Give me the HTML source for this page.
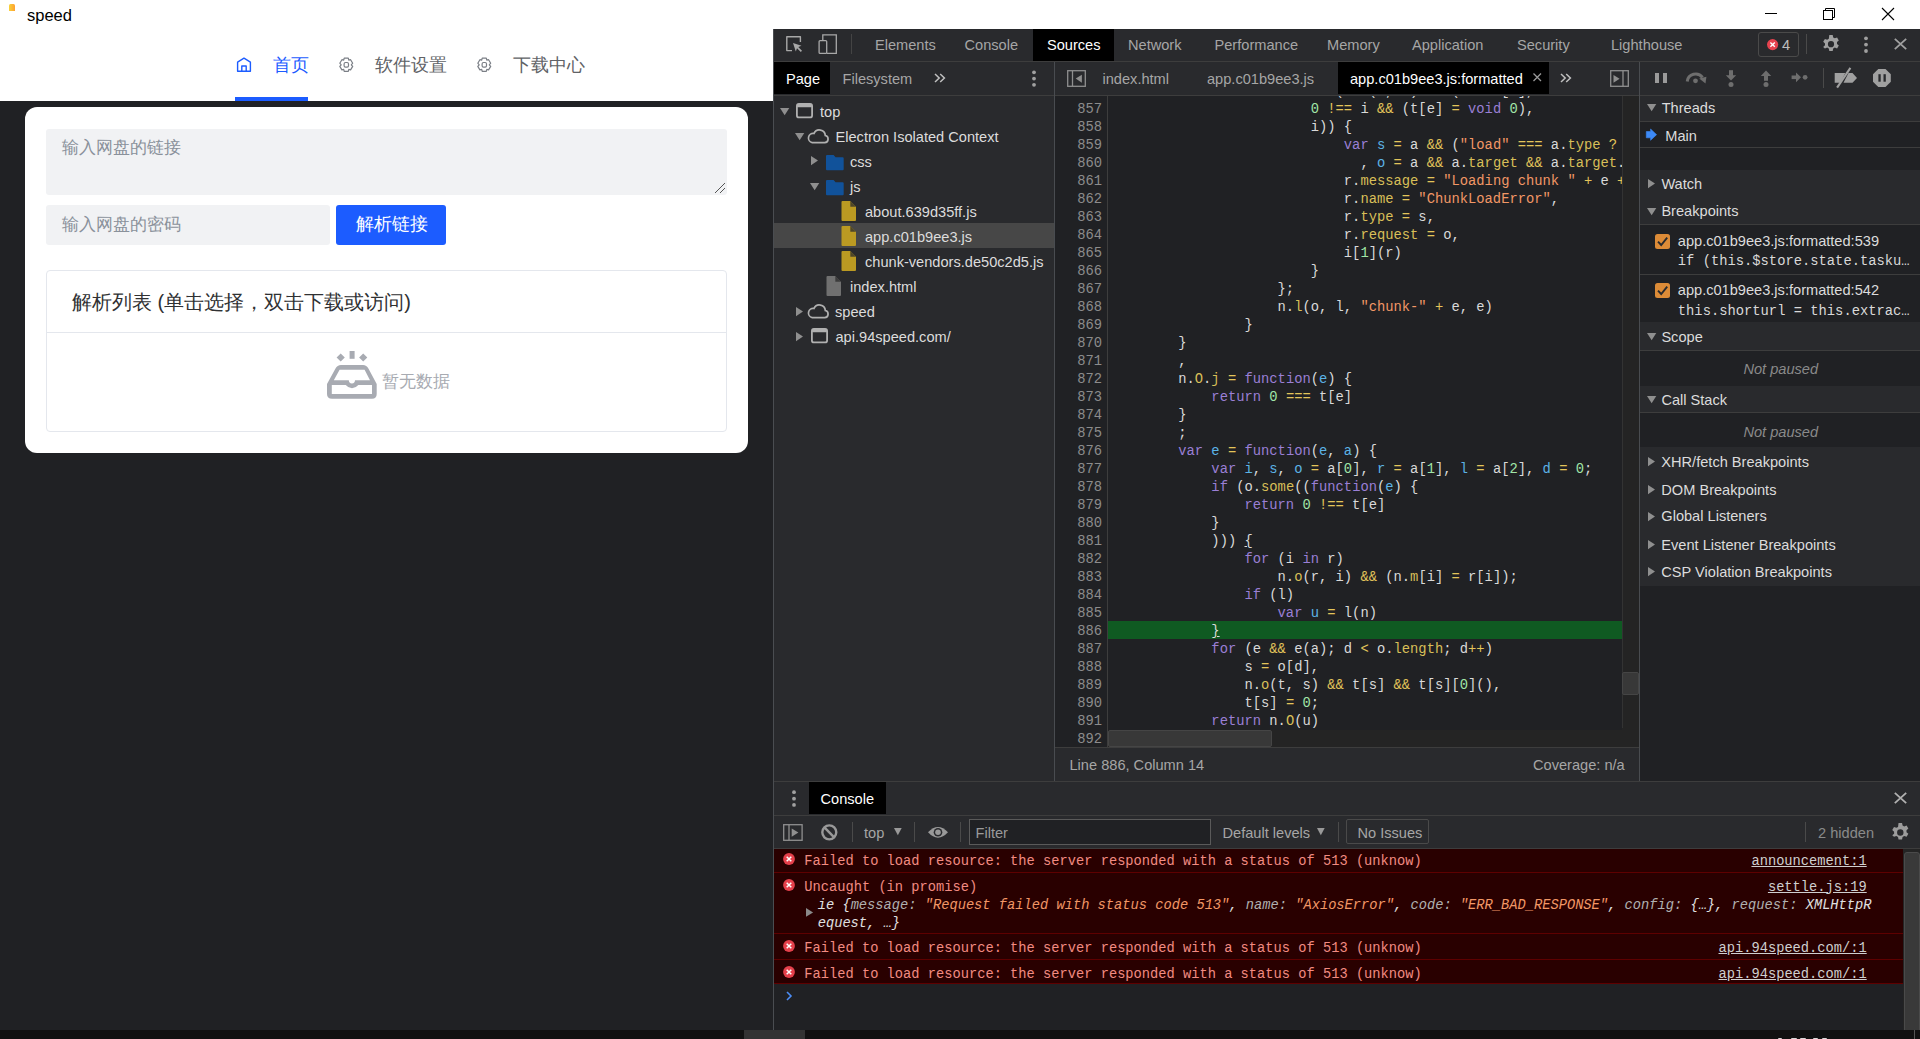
<!DOCTYPE html>
<html><head><meta charset="utf-8">
<style>
*{margin:0;padding:0;box-sizing:border-box}
html,body{width:1920px;height:1039px;overflow:hidden;background:#202124;font-family:"Liberation Sans",sans-serif;position:relative}
.a{position:absolute}
.t{position:absolute;white-space:pre;line-height:1}
/* title bar */
#title{left:0;top:0;width:1920px;height:29px;background:#fff}
/* app */
#nav{left:0;top:29px;width:773px;height:72px;background:#fff}
#card{left:25px;top:107px;width:723px;height:346px;background:#fff;border-radius:12px}
.navt{font-size:17.5px}
.ph{color:#8a919b;font-size:17px}
/* devtools */
#dt{left:773px;top:29px;width:1147px;height:1001px;background:#292a2d;border-left:1px solid #3d3d3d}
.ui{color:#9aa0a6;font-size:15px}
.m{font-family:"Liberation Mono",monospace}
#taskbar{left:0;top:1030px;width:1920px;height:9px;background:#111}
</style></head><body>

<div id="title" class="a">
  <div class="a" style="left:9px;top:4px;width:6px;height:7px;background:linear-gradient(90deg,#f7d23a,#ffa030);border-radius:1.5px 1.5px 0 0"></div>
  <div class="t" style="left:27px;top:6.5px;font-size:16.5px;color:#000">speed</div>
</div>

<div id="nav" class="a">
  <svg class="a" style="left:236px;top:28px" width="16" height="15" viewBox="0 0 16 15"><path d="M1.6 14.2V5.2L8 1.2l6.4 4v9zM5.8 14.2V9h4.4v5.2" fill="none" stroke="#1c5cff" stroke-width="1.4" stroke-linejoin="round"/></svg>
  <div class="t navt" style="left:273px;top:27.5px;color:#1c5cff">首页</div>
  <div class="a" style="left:235px;top:68px;width:73px;height:4px;background:#1c5cff"></div>
  <svg class="a gear" style="left:338px;top:28px" width="17" height="16" viewBox="0 0 17 16"><path d="M6.2 1.2h4.1l.5 2 1.8 -.5 2.1 3.5 -1.4 1.6 1.4 1.6 -2.1 3.5 -1.8 -.5 -.5 2H6.2l-.5-2 -1.8.5L1.8 9.4l1.4-1.6L1.8 6.2l2.1-3.5 1.8.5z" fill="none" stroke="#7b7f86" stroke-width="1.2" stroke-linejoin="round"/><rect x="6.1" y="5.5" width="4.4" height="4.6" rx="1.4" fill="none" stroke="#7b7f86" stroke-width="1.2"/></svg>
  <div class="t navt" style="left:375px;top:27.5px;color:#606266">软件设置</div>
  <svg class="a gear" style="left:476px;top:28px" width="17" height="16" viewBox="0 0 17 16"><path d="M6.2 1.2h4.1l.5 2 1.8 -.5 2.1 3.5 -1.4 1.6 1.4 1.6 -2.1 3.5 -1.8 -.5 -.5 2H6.2l-.5-2 -1.8.5L1.8 9.4l1.4-1.6L1.8 6.2l2.1-3.5 1.8.5z" fill="none" stroke="#7b7f86" stroke-width="1.2" stroke-linejoin="round"/><rect x="6.1" y="5.5" width="4.4" height="4.6" rx="1.4" fill="none" stroke="#7b7f86" stroke-width="1.2"/></svg>
  <div class="t navt" style="left:513px;top:27.5px;color:#606266">下载中心</div>
</div>
<div id="card" class="a">
  <div class="a" style="left:21px;top:22px;width:681px;height:66px;background:#f1f2f4;border-radius:3px"></div>
  <div class="t ph" style="left:37px;top:32px">输入网盘的链接</div>
  <svg class="a" style="left:689px;top:75px" width="12" height="12" viewBox="0 0 12 12"><path d="M1 11L11 1M6 11l5-5" stroke="#555" stroke-width="1"/></svg>
  <div class="a" style="left:21px;top:98px;width:284px;height:40px;background:#f1f2f4;border-radius:3px"></div>
  <div class="t ph" style="left:37px;top:109px">输入网盘的密码</div>
  <div class="a" style="left:311px;top:98px;width:110px;height:40px;background:#1c5cff;border-radius:3px"></div>
  <div class="t" style="left:331px;top:109px;font-size:17.5px;color:#fff">解析链接</div>
  <div class="a" style="left:21px;top:163px;width:681px;height:162px;border:1px solid #e4e7ed;border-radius:4px"></div>
  <div class="a" style="left:22px;top:225px;width:679px;height:1px;background:#e4e7ed"></div>
  <div class="t" style="left:47px;top:185px;font-size:20px;color:#303133">解析列表 (单击选择，双击下载或访问)</div>
  <svg class="a" style="left:302px;top:244px" width="50" height="48" viewBox="0 0 50 48">
    <rect x="22.6" y="0" width="5" height="7.8" fill="#a8abb2"/>
    <path d="M13.7 2.4l4.1 4.1-4.1 4.1-4.1-4.1z M36.2 2.4l4.1 4.1-4.1 4.1-4.1-4.1z" fill="#a8abb2"/>
    <path d="M8.5 17.5Q10.3 14 14 14H36Q39.6 14 41.4 17.5L49.7 33V43Q49.7 47.8 45 47.8H5Q0 47.8 0 43V33Z" fill="#a8abb2"/>
    <path d="M12.6 18.8H37.6L43 29.3H28A3.1 3.1 0 0 1 21.8 29.3H6.8Z" fill="#fff"/>
    <path d="M4.8 34H18.8Q21.5 37.3 25 37.3Q28.5 37.3 31.3 34H45V43H4.8Z" fill="#fff"/>
  </svg>
  <div class="t" style="left:356.8px;top:265.8px;font-size:17.2px;color:#a8abb2">暂无数据</div>
</div>

<div class="a" style="left:773px;top:29px;width:1px;height:1001px;background:#4a4d51;"></div>
<div class="a" style="left:774px;top:29px;width:1146px;height:1001px;background:#292a2d;"></div>
<div class="a" style="left:774px;top:61px;width:1146px;height:1px;background:#3d3d3d;"></div>
<div class="a" style="left:1033px;top:29px;width:81px;height:32px;background:#000;"></div>
<div class="t" style="left:875px;top:37.64px;font-size:14.6px;color:#a6a6a6;">Elements</div>
<div class="t" style="left:964.5px;top:37.64px;font-size:14.6px;color:#a6a6a6;">Console</div>
<div class="t" style="left:1047px;top:37.64px;font-size:14.6px;color:#fff;">Sources</div>
<div class="t" style="left:1128px;top:37.64px;font-size:14.6px;color:#a6a6a6;">Network</div>
<div class="t" style="left:1214.5px;top:37.64px;font-size:14.6px;color:#a6a6a6;">Performance</div>
<div class="t" style="left:1327px;top:37.64px;font-size:14.6px;color:#a6a6a6;">Memory</div>
<div class="t" style="left:1412px;top:37.64px;font-size:14.6px;color:#a6a6a6;">Application</div>
<div class="t" style="left:1517px;top:37.64px;font-size:14.6px;color:#a6a6a6;">Security</div>
<div class="t" style="left:1611px;top:37.64px;font-size:14.6px;color:#a6a6a6;">Lighthouse</div>
<div class="a" style="left:774px;top:95px;width:1146px;height:1px;background:#3d3d3d;"></div>
<div class="a" style="left:774px;top:62px;width:56px;height:32px;background:#000;"></div>
<div class="t" style="left:786px;top:71.64px;font-size:14.6px;color:#fff;">Page</div>
<div class="t" style="left:842.5px;top:71.64px;font-size:14.6px;color:#a6a6a6;">Filesystem</div>
<div class="a" style="left:1054px;top:62px;width:1px;height:719px;background:#494c50;"></div>
<div class="a" style="left:1338px;top:62px;width:211px;height:32px;background:#000;"></div>
<div class="t" style="left:1102.5px;top:71.64px;font-size:14.6px;color:#a6a6a6;">index.html</div>
<div class="t" style="left:1207px;top:71.64px;font-size:14.6px;color:#a6a6a6;">app.c01b9ee3.js</div>
<div class="t" style="left:1350px;top:71.64px;font-size:14.6px;color:#fff;">app.c01b9ee3.js:formatted</div>
<div class="a" style="left:1639px;top:62px;width:1px;height:719px;background:#494c50;"></div>
<div class="a" style="left:774px;top:223px;width:280px;height:25px;background:#474747;"></div>
<div class="t" style="left:820px;top:105.14px;font-size:14.6px;color:#dcdcdc;">top</div>
<div class="t" style="left:835.5px;top:130.14px;font-size:14.6px;color:#dcdcdc;">Electron Isolated Context</div>
<div class="t" style="left:850px;top:155.14px;font-size:14.6px;color:#dcdcdc;">css</div>
<div class="t" style="left:850px;top:180.14px;font-size:14.6px;color:#dcdcdc;">js</div>
<div class="t" style="left:865px;top:205.14px;font-size:14.6px;color:#dcdcdc;">about.639d35ff.js</div>
<div class="t" style="left:865px;top:230.14px;font-size:14.6px;color:#dcdcdc;">app.c01b9ee3.js</div>
<div class="t" style="left:865px;top:255.14px;font-size:14.6px;color:#dcdcdc;">chunk-vendors.de50c2d5.js</div>
<div class="t" style="left:850px;top:280.14px;font-size:14.6px;color:#dcdcdc;">index.html</div>
<div class="t" style="left:835px;top:305.14px;font-size:14.6px;color:#dcdcdc;">speed</div>
<div class="t" style="left:835.5px;top:330.14px;font-size:14.6px;color:#dcdcdc;">api.94speed.com/</div>
<div class="a" style="left:1055px;top:96px;width:584px;height:651px;background:#202124;"></div>
<div class="a" style="left:1107px;top:96px;width:1px;height:651px;background:#3d3d3d;"></div>
<div class="a" style="left:1055px;top:747px;width:584px;height:1px;background:#3d3d3d;"></div>
<div class="a" style="left:774px;top:781px;width:1146px;height:1px;background:#3d3d3d;"></div>
<div class="t" style="left:1069.5px;top:757.64px;font-size:14.6px;color:#a6a6a6;">Line 886, Column 14</div>
<div class="t" style="left:1533px;top:757.64px;font-size:14.6px;color:#a6a6a6;">Coverage: n/a</div>
<div class="a" style="left:1640px;top:96px;width:280px;height:685px;background:#202124;"></div>
<div class="a" style="left:1640px;top:96px;width:280px;height:25px;background:#292a2d;"></div>
<div class="a" style="left:1640px;top:121px;width:280px;height:1px;background:#3d3d3d;"></div>
<div class="a" style="left:1640px;top:147px;width:280px;height:1px;background:#3d3d3d;"></div>
<div class="a" style="left:1640px;top:170px;width:280px;height:54px;background:#292a2d;"></div>
<div class="a" style="left:1640px;top:224px;width:280px;height:1px;background:#3d3d3d;"></div>
<div class="a" style="left:1640px;top:274px;width:280px;height:1px;background:#3d3d3d;"></div>
<div class="a" style="left:1640px;top:322px;width:280px;height:28px;background:#292a2d;"></div>
<div class="a" style="left:1640px;top:350px;width:280px;height:1px;background:#3d3d3d;"></div>
<div class="a" style="left:1640px;top:386px;width:280px;height:26px;background:#292a2d;"></div>
<div class="a" style="left:1640px;top:412px;width:280px;height:1px;background:#3d3d3d;"></div>
<div class="a" style="left:1640px;top:447px;width:280px;height:139px;background:#292a2d;"></div>
<div class="t" style="left:1661.7px;top:100.64px;font-size:14.6px;color:#dcdcdc;">Threads</div>
<div class="t" style="left:1665.3px;top:128.64px;font-size:14.6px;color:#dcdcdc;">Main</div>
<div class="t" style="left:1661.4px;top:176.64px;font-size:14.6px;color:#dcdcdc;">Watch</div>
<div class="t" style="left:1661.4px;top:204.14px;font-size:14.6px;color:#dcdcdc;">Breakpoints</div>
<div class="t" style="left:1677.8px;top:234.14px;font-size:14.6px;color:#dcdcdc;">app.c01b9ee3.js:formatted:539</div>
<div class="t" style="left:1677.8px;top:283.14px;font-size:14.6px;color:#dcdcdc;">app.c01b9ee3.js:formatted:542</div>
<div class="t" style="left:1661.4px;top:329.64px;font-size:14.6px;color:#dcdcdc;">Scope</div>
<div class="t" style="left:1661.4px;top:392.64px;font-size:14.6px;color:#dcdcdc;">Call Stack</div>
<div class="t" style="left:1661.3px;top:454.64px;font-size:14.6px;color:#dcdcdc;">XHR/fetch Breakpoints</div>
<div class="t" style="left:1661.3px;top:482.64px;font-size:14.6px;color:#dcdcdc;">DOM Breakpoints</div>
<div class="t" style="left:1661.3px;top:509.34px;font-size:14.6px;color:#dcdcdc;">Global Listeners</div>
<div class="t" style="left:1661.3px;top:537.74px;font-size:14.6px;color:#dcdcdc;">Event Listener Breakpoints</div>
<div class="t" style="left:1661.3px;top:564.74px;font-size:14.6px;color:#dcdcdc;">CSP Violation Breakpoints</div>
<div class="t" style="left:1743.4px;top:361.64px;font-size:14.6px;color:#8a8a8a;font-style:italic">Not paused</div>
<div class="t" style="left:1743.4px;top:424.64px;font-size:14.6px;color:#8a8a8a;font-style:italic">Not paused</div>
<div class="a" style="left:774px;top:782px;width:1146px;height:33px;background:#292a2d;"></div>
<div class="a" style="left:809px;top:782px;width:77px;height:32px;background:#000;"></div>
<div class="t" style="left:820.5px;top:791.64px;font-size:14.6px;color:#fff;">Console</div>
<div class="a" style="left:774px;top:815px;width:1146px;height:1px;background:#3d3d3d;"></div>
<div class="a" style="left:774px;top:816px;width:1146px;height:32px;background:#292a2d;"></div>
<div class="a" style="left:774px;top:848px;width:1146px;height:1px;background:#3d3d3d;"></div>
<div class="a" style="left:774px;top:850px;width:1146px;height:180px;background:#202124;"></div>
<div class="a" style="left:1108px;top:621px;width:514px;height:18px;background:#0f5a22;"></div>
<div class="a" style="left:1108px;top:96px;width:514px;height:634px;overflow:hidden">
<div class="t m" style="left:202.72px;top:-10.58px;font-size:13.8px;color:#d9d9d9"><span style="color:#9a7fd5">if</span> (n.<span style="color:#d8bf58">o</span>(t, e) <span style="color:#e3c55b">&amp;&amp;</span> (i <span style="color:#e3c55b">=</span> t[e],</div>
<div class="t m" style="left:202.72px;top:7.42px;font-size:13.8px;color:#d9d9d9"><span style="color:#a1e6a8">0</span> <span style="color:#e3c55b">!==</span> i <span style="color:#e3c55b">&amp;&amp;</span> (t[e] <span style="color:#e3c55b">=</span> <span style="color:#9a7fd5">void</span> <span style="color:#a1e6a8">0</span>),</div>
<div class="t m" style="left:202.72px;top:25.42px;font-size:13.8px;color:#d9d9d9">i)) {</div>
<div class="t m" style="left:235.84px;top:43.42px;font-size:13.8px;color:#d9d9d9"><span style="color:#9a7fd5">var</span> <span style="color:#5cb3e6">s</span> <span style="color:#e3c55b">=</span> a <span style="color:#e3c55b">&amp;&amp;</span> (<span style="color:#f29766">&quot;load&quot;</span> <span style="color:#e3c55b">===</span> a.<span style="color:#d8bf58">type</span> <span style="color:#e3c55b">?</span> <span style="color:#f29766">&quot;missing&quot;</span> : a.<span style="color:#d8bf58">type</span>)</div>
<div class="t m" style="left:252.40px;top:61.42px;font-size:13.8px;color:#d9d9d9">, <span style="color:#5cb3e6">o</span> <span style="color:#e3c55b">=</span> a <span style="color:#e3c55b">&amp;&amp;</span> a.<span style="color:#d8bf58">target</span> <span style="color:#e3c55b">&amp;&amp;</span> a.<span style="color:#d8bf58">target</span>.<span style="color:#d8bf58">src</span>;</div>
<div class="t m" style="left:235.84px;top:79.42px;font-size:13.8px;color:#d9d9d9">r.<span style="color:#d8bf58">message</span> <span style="color:#e3c55b">=</span> <span style="color:#f29766">&quot;Loading chunk &quot;</span> <span style="color:#e3c55b">+</span> e <span style="color:#e3c55b">+</span> <span style="color:#f29766">&quot; failed.\n(&quot;</span> <span style="color:#e3c55b">+</span> s <span style="color:#e3c55b">+</span> <span style="color:#f29766">&quot;: &quot;</span> <span style="color:#e3c55b">+</span> o <span style="color:#e3c55b">+</span> <span style="color:#f29766">&quot;)&quot;</span>,</div>
<div class="t m" style="left:235.84px;top:97.42px;font-size:13.8px;color:#d9d9d9">r.<span style="color:#d8bf58">name</span> <span style="color:#e3c55b">=</span> <span style="color:#f29766">&quot;ChunkLoadError&quot;</span>,</div>
<div class="t m" style="left:235.84px;top:115.42px;font-size:13.8px;color:#d9d9d9">r.<span style="color:#d8bf58">type</span> <span style="color:#e3c55b">=</span> s,</div>
<div class="t m" style="left:235.84px;top:133.42px;font-size:13.8px;color:#d9d9d9">r.<span style="color:#d8bf58">request</span> <span style="color:#e3c55b">=</span> o,</div>
<div class="t m" style="left:235.84px;top:151.42px;font-size:13.8px;color:#d9d9d9">i[<span style="color:#a1e6a8">1</span>](r)</div>
<div class="t m" style="left:202.72px;top:169.42px;font-size:13.8px;color:#d9d9d9">}</div>
<div class="t m" style="left:169.60px;top:187.42px;font-size:13.8px;color:#d9d9d9">};</div>
<div class="t m" style="left:169.60px;top:205.42px;font-size:13.8px;color:#d9d9d9">n.<span style="color:#d8bf58">l</span>(o, l, <span style="color:#f29766">&quot;chunk-&quot;</span> <span style="color:#e3c55b">+</span> e, e)</div>
<div class="t m" style="left:136.48px;top:223.42px;font-size:13.8px;color:#d9d9d9">}</div>
<div class="t m" style="left:70.24px;top:241.42px;font-size:13.8px;color:#d9d9d9">}</div>
<div class="t m" style="left:70.24px;top:259.42px;font-size:13.8px;color:#d9d9d9">,</div>
<div class="t m" style="left:70.24px;top:277.42px;font-size:13.8px;color:#d9d9d9">n.<span style="color:#d8bf58">O</span>.<span style="color:#d8bf58">j</span> <span style="color:#e3c55b">=</span> <span style="color:#9a7fd5">function</span>(<span style="color:#5cb3e6">e</span>) {</div>
<div class="t m" style="left:103.36px;top:295.42px;font-size:13.8px;color:#d9d9d9"><span style="color:#9a7fd5">return</span> <span style="color:#a1e6a8">0</span> <span style="color:#e3c55b">===</span> t[e]</div>
<div class="t m" style="left:70.24px;top:313.42px;font-size:13.8px;color:#d9d9d9">}</div>
<div class="t m" style="left:70.24px;top:331.42px;font-size:13.8px;color:#d9d9d9">;</div>
<div class="t m" style="left:70.24px;top:349.42px;font-size:13.8px;color:#d9d9d9"><span style="color:#9a7fd5">var</span> <span style="color:#5cb3e6">e</span> <span style="color:#e3c55b">=</span> <span style="color:#9a7fd5">function</span>(<span style="color:#5cb3e6">e</span>, <span style="color:#5cb3e6">a</span>) {</div>
<div class="t m" style="left:103.36px;top:367.42px;font-size:13.8px;color:#d9d9d9"><span style="color:#9a7fd5">var</span> <span style="color:#5cb3e6">i</span>, <span style="color:#5cb3e6">s</span>, <span style="color:#5cb3e6">o</span> <span style="color:#e3c55b">=</span> a[<span style="color:#a1e6a8">0</span>], <span style="color:#5cb3e6">r</span> <span style="color:#e3c55b">=</span> a[<span style="color:#a1e6a8">1</span>], <span style="color:#5cb3e6">l</span> <span style="color:#e3c55b">=</span> a[<span style="color:#a1e6a8">2</span>], <span style="color:#5cb3e6">d</span> <span style="color:#e3c55b">=</span> <span style="color:#a1e6a8">0</span>;</div>
<div class="t m" style="left:103.36px;top:385.42px;font-size:13.8px;color:#d9d9d9"><span style="color:#9a7fd5">if</span> (o.<span style="color:#d8bf58">some</span>((<span style="color:#9a7fd5">function</span>(<span style="color:#5cb3e6">e</span>) {</div>
<div class="t m" style="left:136.48px;top:403.42px;font-size:13.8px;color:#d9d9d9"><span style="color:#9a7fd5">return</span> <span style="color:#a1e6a8">0</span> <span style="color:#e3c55b">!==</span> t[e]</div>
<div class="t m" style="left:103.36px;top:421.42px;font-size:13.8px;color:#d9d9d9">}</div>
<div class="t m" style="left:103.36px;top:439.42px;font-size:13.8px;color:#d9d9d9">))) <u>{</u></div>
<div class="t m" style="left:136.48px;top:457.42px;font-size:13.8px;color:#d9d9d9"><span style="color:#9a7fd5">for</span> (i <span style="color:#9a7fd5">in</span> r)</div>
<div class="t m" style="left:169.60px;top:475.42px;font-size:13.8px;color:#d9d9d9">n.<span style="color:#d8bf58">o</span>(r, i) <span style="color:#e3c55b">&amp;&amp;</span> (n.<span style="color:#d8bf58">m</span>[i] <span style="color:#e3c55b">=</span> r[i]);</div>
<div class="t m" style="left:136.48px;top:493.42px;font-size:13.8px;color:#d9d9d9"><span style="color:#9a7fd5">if</span> (l)</div>
<div class="t m" style="left:169.60px;top:511.42px;font-size:13.8px;color:#d9d9d9"><span style="color:#9a7fd5">var</span> <span style="color:#5cb3e6">u</span> <span style="color:#e3c55b">=</span> l(n)</div>
<div class="t m" style="left:103.36px;top:529.42px;font-size:13.8px;color:#d9d9d9"><u>}</u></div>
<div class="t m" style="left:103.36px;top:547.42px;font-size:13.8px;color:#d9d9d9"><span style="color:#9a7fd5">for</span> (e <span style="color:#e3c55b">&amp;&amp;</span> e(a); d <span style="color:#e3c55b">&lt;</span> o.<span style="color:#d8bf58">length</span>; d<span style="color:#e3c55b">++</span>)</div>
<div class="t m" style="left:136.48px;top:565.42px;font-size:13.8px;color:#d9d9d9">s <span style="color:#e3c55b">=</span> o[d],</div>
<div class="t m" style="left:136.48px;top:583.42px;font-size:13.8px;color:#d9d9d9">n.<span style="color:#d8bf58">o</span>(t, s) <span style="color:#e3c55b">&amp;&amp;</span> t[s] <span style="color:#e3c55b">&amp;&amp;</span> t[s][<span style="color:#a1e6a8">0</span>](),</div>
<div class="t m" style="left:136.48px;top:601.42px;font-size:13.8px;color:#d9d9d9">t[s] <span style="color:#e3c55b">=</span> <span style="color:#a1e6a8">0</span>;</div>
<div class="t m" style="left:103.36px;top:619.42px;font-size:13.8px;color:#d9d9d9"><span style="color:#9a7fd5">return</span> n.<span style="color:#d8bf58">O</span>(u)</div>
</div>
<div class="a" style="left:1055px;top:96px;width:52px;height:651px;overflow:hidden">
<div class="t m" style="right:5px;top:-10.58px;font-size:13.8px;color:#8c8c8c">856</div>
<div class="t m" style="right:5px;top:7.42px;font-size:13.8px;color:#8c8c8c">857</div>
<div class="t m" style="right:5px;top:25.42px;font-size:13.8px;color:#8c8c8c">858</div>
<div class="t m" style="right:5px;top:43.42px;font-size:13.8px;color:#8c8c8c">859</div>
<div class="t m" style="right:5px;top:61.42px;font-size:13.8px;color:#8c8c8c">860</div>
<div class="t m" style="right:5px;top:79.42px;font-size:13.8px;color:#8c8c8c">861</div>
<div class="t m" style="right:5px;top:97.42px;font-size:13.8px;color:#8c8c8c">862</div>
<div class="t m" style="right:5px;top:115.42px;font-size:13.8px;color:#8c8c8c">863</div>
<div class="t m" style="right:5px;top:133.42px;font-size:13.8px;color:#8c8c8c">864</div>
<div class="t m" style="right:5px;top:151.42px;font-size:13.8px;color:#8c8c8c">865</div>
<div class="t m" style="right:5px;top:169.42px;font-size:13.8px;color:#8c8c8c">866</div>
<div class="t m" style="right:5px;top:187.42px;font-size:13.8px;color:#8c8c8c">867</div>
<div class="t m" style="right:5px;top:205.42px;font-size:13.8px;color:#8c8c8c">868</div>
<div class="t m" style="right:5px;top:223.42px;font-size:13.8px;color:#8c8c8c">869</div>
<div class="t m" style="right:5px;top:241.42px;font-size:13.8px;color:#8c8c8c">870</div>
<div class="t m" style="right:5px;top:259.42px;font-size:13.8px;color:#8c8c8c">871</div>
<div class="t m" style="right:5px;top:277.42px;font-size:13.8px;color:#8c8c8c">872</div>
<div class="t m" style="right:5px;top:295.42px;font-size:13.8px;color:#8c8c8c">873</div>
<div class="t m" style="right:5px;top:313.42px;font-size:13.8px;color:#8c8c8c">874</div>
<div class="t m" style="right:5px;top:331.42px;font-size:13.8px;color:#8c8c8c">875</div>
<div class="t m" style="right:5px;top:349.42px;font-size:13.8px;color:#8c8c8c">876</div>
<div class="t m" style="right:5px;top:367.42px;font-size:13.8px;color:#8c8c8c">877</div>
<div class="t m" style="right:5px;top:385.42px;font-size:13.8px;color:#8c8c8c">878</div>
<div class="t m" style="right:5px;top:403.42px;font-size:13.8px;color:#8c8c8c">879</div>
<div class="t m" style="right:5px;top:421.42px;font-size:13.8px;color:#8c8c8c">880</div>
<div class="t m" style="right:5px;top:439.42px;font-size:13.8px;color:#8c8c8c">881</div>
<div class="t m" style="right:5px;top:457.42px;font-size:13.8px;color:#8c8c8c">882</div>
<div class="t m" style="right:5px;top:475.42px;font-size:13.8px;color:#8c8c8c">883</div>
<div class="t m" style="right:5px;top:493.42px;font-size:13.8px;color:#8c8c8c">884</div>
<div class="t m" style="right:5px;top:511.42px;font-size:13.8px;color:#8c8c8c">885</div>
<div class="t m" style="right:5px;top:529.42px;font-size:13.8px;color:#8c8c8c">886</div>
<div class="t m" style="right:5px;top:547.42px;font-size:13.8px;color:#8c8c8c">887</div>
<div class="t m" style="right:5px;top:565.42px;font-size:13.8px;color:#8c8c8c">888</div>
<div class="t m" style="right:5px;top:583.42px;font-size:13.8px;color:#8c8c8c">889</div>
<div class="t m" style="right:5px;top:601.42px;font-size:13.8px;color:#8c8c8c">890</div>
<div class="t m" style="right:5px;top:619.42px;font-size:13.8px;color:#8c8c8c">891</div>
<div class="t m" style="right:5px;top:637.42px;font-size:13.8px;color:#8c8c8c">892</div>
</div>
<div class="a" style="left:1108px;top:730px;width:514px;height:17px;background:#242424;"></div>
<div class="a" style="left:1108px;top:730px;width:164px;height:17px;background:#383838;border:1px solid #454545;border-radius:2px"></div>
<div class="a" style="left:1622px;top:96px;width:17px;height:632px;background:#242424;border-left:1px solid #333"></div>
<div class="a" style="left:1622px;top:672px;width:17px;height:23px;background:#383838;border:1px solid #454545;border-radius:2px"></div>
<div class="a" style="left:1622px;top:728px;width:17px;height:19px;background:#242424;"></div>
<svg class="a" style="left:1765px;top:13px;overflow:visible" width="12" height="1" viewBox="0 0 12 1"><rect x="0" y="0" width="12" height="1" fill="#000"/></svg>
<svg class="a" style="left:1823px;top:8px;overflow:visible" width="12" height="12" viewBox="0 0 12 12"><path d="M2.5 2.5V0.5H11.5V9.5H9.5" fill="none" stroke="#000" stroke-width="1"/><rect x="0.5" y="2.5" width="9" height="9" fill="none" stroke="#000" stroke-width="1"/></svg>
<svg class="a" style="left:1882px;top:8px;overflow:visible" width="12" height="12" viewBox="0 0 12 12"><path d="M0 0L12 12M12 0L0 12" stroke="#000" stroke-width="1.1"/></svg>
<svg class="a" style="left:786px;top:36px;overflow:visible" width="17" height="17" viewBox="0 0 17 17"><path d="M6 14.6H0.8V0.8H14.4V6" fill="none" stroke="#a8a8a8" stroke-width="1.4" stroke-linejoin="round"/><path d="M7 7L15.5 9.8 12.3 11 16 14.8 14.8 16 11 12.3 9.8 15.5Z" fill="#a8a8a8"/></svg>
<svg class="a" style="left:818px;top:34px;overflow:visible" width="20" height="21" viewBox="0 0 20 21"><path d="M4.8 6V0.8H18.3V19.4H9" fill="none" stroke="#a8a8a8" stroke-width="1.3"/><rect x="1.1" y="6.6" width="7.6" height="12.8" rx="1" fill="none" stroke="#a8a8a8" stroke-width="1.3"/></svg>
<div class="a" style="left:851px;top:34px;width:1px;height:20px;background:#444;"></div>
<div class="a" style="left:1758px;top:32px;width:41px;height:25px;background:transparent;border:1px solid #4a4a4a;border-radius:3px"></div>
<svg class="a" style="left:1767px;top:39px;overflow:visible" width="11" height="11" viewBox="0 0 11 11"><circle cx="5.6" cy="5.6" r="5.6" fill="#e6434f"/><path d="M3.4 3.4L7.8 7.8M7.8 3.4L3.4 7.8" stroke="#fff" stroke-width="1.4"/></svg>
<div class="t" style="left:1782px;top:37.64px;font-size:14.6px;color:#bdbdbd;">4</div>
<div class="a" style="left:1806px;top:34px;width:1px;height:20px;background:#4a4a4a;"></div>
<svg class="a" style="left:1821.5px;top:35px;overflow:visible" width="18" height="18.4" viewBox="0 0 18 18.4"><path fill="#a0a0a0" fill-rule="evenodd" d="M7.3 0h3.4l.5 2.4 1.6.9 2.3-.8 1.7 2.9-1.8 1.6v1.9l1.8 1.6-1.7 2.9-2.3-.8-1.6.9-.5 2.4H7.3l-.5-2.4-1.6-.9-2.3.8L1.2 11.9 3 10.3V8.4L1.2 6.8 2.9 3.9l2.3.8 1.6-.9zM9 6.1a3.1 3.1 0 1 0 0 6.2 3.1 3.1 0 1 0 0-6.2z"/></svg>
<svg class="a" style="left:1864px;top:36px;overflow:visible" width="4" height="17" viewBox="0 0 4 17"><circle cx="2" cy="2.3" r="1.9" fill="#a0a0a0"/><circle cx="2" cy="8.6" r="1.9" fill="#a0a0a0"/><circle cx="2" cy="15" r="1.9" fill="#a0a0a0"/></svg>
<svg class="a" style="left:1894px;top:38px;overflow:visible" width="13" height="12" viewBox="0 0 13 12"><path d="M0.8 0.8L12.2 11.2M12.2 0.8L0.8 11.2" stroke="#a0a0a0" stroke-width="1.8"/></svg>
<svg class="a" style="left:934px;top:73px;overflow:visible" width="11" height="10" viewBox="0 0 11 10"><path d="M1 1L5.2 5 1 9M6.2 1L10.4 5 6.2 9" fill="none" stroke="#c0c0c0" stroke-width="1.5"/></svg>
<svg class="a" style="left:1032px;top:70px;overflow:visible" width="4" height="17" viewBox="0 0 4 17"><circle cx="2" cy="2.3" r="1.9" fill="#a0a0a0"/><circle cx="2" cy="8.6" r="1.9" fill="#a0a0a0"/><circle cx="2" cy="14.8" r="1.9" fill="#a0a0a0"/></svg>
<svg class="a" style="left:1067px;top:70px;overflow:visible" width="19" height="17" viewBox="0 0 19 17"><rect x="0.7" y="0.7" width="17.6" height="15.6" fill="none" stroke="#8f8f8f" stroke-width="1.3"/><path d="M5.5 0.7V16.3" stroke="#8f8f8f" stroke-width="1.3"/><path d="M8.7 8.5L14.9 4.7V12.8Z" fill="#8f8f8f"/></svg>
<svg class="a" style="left:1532.5px;top:73px;overflow:visible" width="8.5" height="8.5" viewBox="0 0 8.5 8.5"><path d="M0.5 0.5L8 8M8 0.5L0.5 8" stroke="#9a9a9a" stroke-width="1.3"/></svg>
<svg class="a" style="left:1560px;top:73px;overflow:visible" width="11" height="10" viewBox="0 0 11 10"><path d="M1 1L5.2 5 1 9M6.2 1L10.4 5 6.2 9" fill="none" stroke="#c0c0c0" stroke-width="1.5"/></svg>
<svg class="a" style="left:1610px;top:70px;overflow:visible" width="19" height="17" viewBox="0 0 19 17"><rect x="0.7" y="0.7" width="17.6" height="15.6" fill="none" stroke="#8f8f8f" stroke-width="1.3"/><path d="M13 0.7V16.3" stroke="#8f8f8f" stroke-width="1.3"/><path d="M3.5 4.9L9.6 8.7 3.5 12.7Z" fill="#8f8f8f"/></svg>
<div class="a" style="left:1655.2px;top:72.9px;width:4px;height:10.1px;background:#9a9a9a;"></div>
<div class="a" style="left:1662.8px;top:72.9px;width:4.2px;height:10.1px;background:#9a9a9a;"></div>
<svg class="a" style="left:1685px;top:70px;overflow:visible" width="24" height="15" viewBox="0 0 24 15"><path d="M2.2 11.5A8.5 8.5 0 0 1 17.5 7.5" fill="none" stroke="#6e6e6e" stroke-width="3"/><path d="M14.2 8.6L21.4 6.7 20.5 13.6Z" fill="#6e6e6e"/><circle cx="10.5" cy="10.8" r="2.4" fill="#6e6e6e"/></svg>
<svg class="a" style="left:1725px;top:69px;overflow:visible" width="12" height="19" viewBox="0 0 12 19"><rect x="4" y="1.2" width="4" height="6" fill="#6e6e6e"/><path d="M0.8 6.3H11.2L6 11.6Z" fill="#6e6e6e"/><circle cx="6" cy="15.4" r="2.5" fill="#6e6e6e"/></svg>
<svg class="a" style="left:1760px;top:69px;overflow:visible" width="12" height="19" viewBox="0 0 12 19"><path d="M6 1.6L11.2 7H0.8Z" fill="#6e6e6e"/><rect x="4" y="6.5" width="4" height="5.3" fill="#6e6e6e"/><circle cx="6" cy="15.4" r="2.5" fill="#6e6e6e"/></svg>
<svg class="a" style="left:1791px;top:72px;overflow:visible" width="18" height="11" viewBox="0 0 18 11"><rect x="0.6" y="3.5" width="5" height="3.6" fill="#6e6e6e"/><path d="M5 0.4L10 5.3 5 10.2Z" fill="#6e6e6e"/><circle cx="14.1" cy="5.3" r="2.4" fill="#6e6e6e"/></svg>
<div class="a" style="left:1823px;top:68px;width:1px;height:20px;background:#4a4a4a;"></div>
<svg class="a" style="left:1834px;top:67px;overflow:visible" width="24" height="22" viewBox="0 0 24 22"><path d="M0.7 6H11.3L6.3 15.8H0.7Z M14.5 6H18.5L23 10.9 18.5 15.8H9.5Z" fill="#a0a0a0"/><path d="M3.1 20.6L16.4 0.8" stroke="#a0a0a0" stroke-width="2.1"/></svg>
<svg class="a" style="left:1872.5px;top:69px;overflow:visible" width="18" height="18" viewBox="0 0 18 18"><path d="M5.3 0H12.5L17.8 5.3V12.7L12.5 18H5.3L0 12.7V5.3Z" fill="#a0a0a0"/><rect x="5.4" y="5.2" width="2.3" height="7.5" fill="#292a2d"/><rect x="10.5" y="5.2" width="2.3" height="7.5" fill="#292a2d"/></svg>
<svg class="a" style="left:779.8px;top:107.8px;overflow:visible" width="9.3" height="7.2" viewBox="0 0 9.3 7.2"><path d="M0 0H9.3L4.65 7.2Z" fill="#8f8f8f"/></svg>
<svg class="a" style="left:796px;top:103.3px;overflow:visible" width="17" height="15.3" viewBox="0 0 17 15.3"><rect x="0.9" y="0.9" width="15.2" height="13.5" rx="2" fill="none" stroke="#b0b0b0" stroke-width="1.8"/><rect x="0.9" y="0.9" width="15.2" height="3.4" rx="1" fill="#b0b0b0"/></svg>
<svg class="a" style="left:795px;top:133px;overflow:visible" width="9.3" height="7.2" viewBox="0 0 9.3 7.2"><path d="M0 0H9.3L4.65 7.2Z" fill="#8f8f8f"/></svg>
<svg class="a" style="left:807.3px;top:128px;overflow:visible" width="23" height="16" viewBox="0 0 23 16"><path d="M5.2 14.6H17.7A3.6 3.6 0 0 0 18.3 7.5 5.9 5.9 0 0 0 7 5.5 4.6 4.6 0 0 0 5.2 14.6Z" fill="none" stroke="#b0b0b0" stroke-width="1.7"/></svg>
<svg class="a" style="left:811.1px;top:155.8px;overflow:visible" width="7" height="9.2" viewBox="0 0 7 9.2"><path d="M0 0L7 4.6 0 9.2Z" fill="#8f8f8f"/></svg>
<svg class="a" style="left:825.9px;top:154.7px;overflow:visible" width="17.7" height="15.2" viewBox="0 0 17.7 15.2"><path d="M0 1A1 1 0 0 1 1 0H7.6L9.6 2.3H16.7A1 1 0 0 1 17.7 3.3V14.2A1 1 0 0 1 16.7 15.2H1A1 1 0 0 1 0 14.2Z" fill="#11529a"/></svg>
<svg class="a" style="left:810px;top:182.8px;overflow:visible" width="9.3" height="7.2" viewBox="0 0 9.3 7.2"><path d="M0 0H9.3L4.65 7.2Z" fill="#8f8f8f"/></svg>
<svg class="a" style="left:825.9px;top:179.8px;overflow:visible" width="17.7" height="15.2" viewBox="0 0 17.7 15.2"><path d="M0 1A1 1 0 0 1 1 0H7.6L9.6 2.3H16.7A1 1 0 0 1 17.7 3.3V14.2A1 1 0 0 1 16.7 15.2H1A1 1 0 0 1 0 14.2Z" fill="#11529a"/></svg>
<svg class="a" style="left:841px;top:201px;overflow:visible" width="15" height="20" viewBox="0 0 15 20"><path d="M0.5 1A1 1 0 0 1 1.5 0H9.3L15 5.7V19A1 1 0 0 1 14 20H1.5A1 1 0 0 1 0.5 19Z" fill="#bb9a22"/><path d="M9.3 0V5.7H15Z" fill="#2b2b2b" opacity="0.75"/></svg>
<svg class="a" style="left:841px;top:226px;overflow:visible" width="15" height="20" viewBox="0 0 15 20"><path d="M0.5 1A1 1 0 0 1 1.5 0H9.3L15 5.7V19A1 1 0 0 1 14 20H1.5A1 1 0 0 1 0.5 19Z" fill="#bb9a22"/><path d="M9.3 0V5.7H15Z" fill="#2b2b2b" opacity="0.75"/></svg>
<svg class="a" style="left:841px;top:251px;overflow:visible" width="15" height="20" viewBox="0 0 15 20"><path d="M0.5 1A1 1 0 0 1 1.5 0H9.3L15 5.7V19A1 1 0 0 1 14 20H1.5A1 1 0 0 1 0.5 19Z" fill="#bb9a22"/><path d="M9.3 0V5.7H15Z" fill="#2b2b2b" opacity="0.75"/></svg>
<svg class="a" style="left:826px;top:276px;overflow:visible" width="15" height="20" viewBox="0 0 15 20"><path d="M0.5 1A1 1 0 0 1 1.5 0H9.3L15 5.7V19A1 1 0 0 1 14 20H1.5A1 1 0 0 1 0.5 19Z" fill="#707070"/><path d="M9.3 0V5.7H15Z" fill="#2b2b2b" opacity="0.75"/></svg>
<svg class="a" style="left:796px;top:306.5px;overflow:visible" width="7" height="9.2" viewBox="0 0 7 9.2"><path d="M0 0L7 4.6 0 9.2Z" fill="#8f8f8f"/></svg>
<svg class="a" style="left:807.3px;top:303px;overflow:visible" width="23" height="16" viewBox="0 0 23 16"><path d="M5.2 14.6H17.7A3.6 3.6 0 0 0 18.3 7.5 5.9 5.9 0 0 0 7 5.5 4.6 4.6 0 0 0 5.2 14.6Z" fill="none" stroke="#b0b0b0" stroke-width="1.7"/></svg>
<svg class="a" style="left:796px;top:331.5px;overflow:visible" width="7" height="9.2" viewBox="0 0 7 9.2"><path d="M0 0L7 4.6 0 9.2Z" fill="#8f8f8f"/></svg>
<svg class="a" style="left:811px;top:328.3px;overflow:visible" width="17" height="15.3" viewBox="0 0 17 15.3"><rect x="0.9" y="0.9" width="15.2" height="13.5" rx="2" fill="none" stroke="#b0b0b0" stroke-width="1.8"/><rect x="0.9" y="0.9" width="15.2" height="3.4" rx="1" fill="#b0b0b0"/></svg>
<svg class="a" style="left:1647px;top:103.7px;overflow:visible" width="9.3" height="7.2" viewBox="0 0 9.3 7.2"><path d="M0 0H9.3L4.65 7.2Z" fill="#8f8f8f"/></svg>
<svg class="a" style="left:1645.8px;top:129px;overflow:visible" width="11" height="11.3" viewBox="0 0 11 11.3"><path d="M0.3 2.5H4.6V0L10.6 5.65 4.6 11.3V8.8H0.3Z" fill="#3d8af7" stroke="#3d8af7" stroke-width="0.6" stroke-linejoin="round"/></svg>
<svg class="a" style="left:1648px;top:178.6px;overflow:visible" width="7" height="9.2" viewBox="0 0 7 9.2"><path d="M0 0L7 4.6 0 9.2Z" fill="#8f8f8f"/></svg>
<svg class="a" style="left:1647px;top:207.5px;overflow:visible" width="9.3" height="7.2" viewBox="0 0 9.3 7.2"><path d="M0 0H9.3L4.65 7.2Z" fill="#8f8f8f"/></svg>
<svg class="a" style="left:1655px;top:234px;overflow:visible" width="15" height="15" viewBox="0 0 15 15"><rect x="0" y="0" width="15" height="15" rx="2.5" fill="#dc8b37"/><path d="M3 7.6L6.2 11 12.2 3.6" fill="none" stroke="#292a2d" stroke-width="1.9"/></svg>
<svg class="a" style="left:1655px;top:283px;overflow:visible" width="15" height="15" viewBox="0 0 15 15"><rect x="0" y="0" width="15" height="15" rx="2.5" fill="#dc8b37"/><path d="M3 7.6L6.2 11 12.2 3.6" fill="none" stroke="#292a2d" stroke-width="1.9"/></svg>
<svg class="a" style="left:1647px;top:332.5px;overflow:visible" width="9.3" height="7.2" viewBox="0 0 9.3 7.2"><path d="M0 0H9.3L4.65 7.2Z" fill="#8f8f8f"/></svg>
<svg class="a" style="left:1647px;top:395.5px;overflow:visible" width="9.3" height="7.2" viewBox="0 0 9.3 7.2"><path d="M0 0H9.3L4.65 7.2Z" fill="#8f8f8f"/></svg>
<svg class="a" style="left:1648px;top:456.9px;overflow:visible" width="7" height="9.2" viewBox="0 0 7 9.2"><path d="M0 0L7 4.6 0 9.2Z" fill="#8f8f8f"/></svg>
<svg class="a" style="left:1648px;top:484.9px;overflow:visible" width="7" height="9.2" viewBox="0 0 7 9.2"><path d="M0 0L7 4.6 0 9.2Z" fill="#8f8f8f"/></svg>
<svg class="a" style="left:1648px;top:511.6px;overflow:visible" width="7" height="9.2" viewBox="0 0 7 9.2"><path d="M0 0L7 4.6 0 9.2Z" fill="#8f8f8f"/></svg>
<svg class="a" style="left:1648px;top:540.0px;overflow:visible" width="7" height="9.2" viewBox="0 0 7 9.2"><path d="M0 0L7 4.6 0 9.2Z" fill="#8f8f8f"/></svg>
<svg class="a" style="left:1648px;top:567.0px;overflow:visible" width="7" height="9.2" viewBox="0 0 7 9.2"><path d="M0 0L7 4.6 0 9.2Z" fill="#8f8f8f"/></svg>
<div class="t m" style="left:1677.8px;top:255.42px;font-size:13.8px;color:#d9d9d9;">if (this.$store.state.tasku…</div>
<div class="t m" style="left:1677.8px;top:304.92px;font-size:13.8px;color:#d9d9d9;">this.shorturl = this.extrac…</div>
<svg class="a" style="left:792px;top:790px;overflow:visible" width="4" height="17" viewBox="0 0 4 17"><circle cx="2" cy="2.2" r="1.9" fill="#a0a0a0"/><circle cx="2" cy="8.7" r="1.9" fill="#a0a0a0"/><circle cx="2" cy="14.9" r="1.9" fill="#a0a0a0"/></svg>
<svg class="a" style="left:1894px;top:792px;overflow:visible" width="13" height="12" viewBox="0 0 13 12"><path d="M0.8 0.8L12.2 11.2M12.2 0.8L0.8 11.2" stroke="#b0b0b0" stroke-width="1.8"/></svg>
<svg class="a" style="left:783px;top:824px;overflow:visible" width="20" height="17" viewBox="0 0 20 17"><rect x="0.7" y="0.7" width="18.4" height="15.6" fill="none" stroke="#8f8f8f" stroke-width="1.3"/><path d="M6 0.7V16.3" stroke="#8f8f8f" stroke-width="1.3"/><path d="M8.7 4.4L15.4 8.5 8.7 12.7Z" fill="#8f8f8f"/></svg>
<svg class="a" style="left:820.8px;top:824.2px;overflow:visible" width="16.6" height="16.7" viewBox="0 0 16.6 16.7"><circle cx="8.3" cy="8.35" r="7" fill="none" stroke="#999" stroke-width="2.4"/><path d="M3.4 3.4L13.2 13.3" stroke="#999" stroke-width="2.4"/></svg>
<div class="a" style="left:852px;top:822px;width:1px;height:20px;background:#4a4a4a;"></div>
<div class="t" style="left:864px;top:826.14px;font-size:14.6px;color:#a6a6a6;">top</div>
<svg class="a" style="left:894.3px;top:827.8px;overflow:visible" width="7.7" height="7.3" viewBox="0 0 7.7 7.3"><path d="M0 0H7.7L3.85 7.3Z" fill="#999"/></svg>
<div class="a" style="left:914px;top:822px;width:1px;height:20px;background:#4a4a4a;"></div>
<svg class="a" style="left:927.6px;top:824.7px;overflow:visible" width="20" height="14.6" viewBox="0 0 20 14.6"><path d="M0 7.3Q10 -3.5 20 7.3 10 18.1 0 7.3Z" fill="#999"/><circle cx="10" cy="7.3" r="4.3" fill="#292a2d"/><circle cx="10" cy="7.3" r="2.8" fill="#999"/></svg>
<div class="a" style="left:960px;top:822px;width:1px;height:20px;background:#4a4a4a;"></div>
<div class="a" style="left:969px;top:819px;width:242px;height:26px;background:#202124;border:1px solid #5a5a5a"></div>
<div class="t" style="left:975.5px;top:825.64px;font-size:14.6px;color:#9a9a9a;">Filter</div>
<div class="t" style="left:1222.5px;top:825.64px;font-size:14.6px;color:#a6a6a6;">Default levels</div>
<svg class="a" style="left:1317px;top:827.8px;overflow:visible" width="7.7" height="7.3" viewBox="0 0 7.7 7.3"><path d="M0 0H7.7L3.85 7.3Z" fill="#999"/></svg>
<div class="a" style="left:1338px;top:822px;width:1px;height:20px;background:#4a4a4a;"></div>
<div class="a" style="left:1345.5px;top:819px;width:83px;height:25px;background:transparent;border:1px solid #4a4a4a;border-radius:2px"></div>
<div class="t" style="left:1357.5px;top:825.64px;font-size:14.6px;color:#a6a6a6;">No Issues</div>
<div class="a" style="left:1805px;top:822px;width:1px;height:20px;background:#4a4a4a;"></div>
<div class="t" style="left:1818px;top:825.64px;font-size:14.6px;color:#8a8a8a;">2 hidden</div>
<svg class="a" style="left:1891.3px;top:823.2px;overflow:visible" width="18.6" height="19" viewBox="0 0 18 18.4"><path fill="#9c9c9c" fill-rule="evenodd" d="M7.3 0h3.4l.5 2.4 1.6.9 2.3-.8 1.7 2.9-1.8 1.6v1.9l1.8 1.6-1.7 2.9-2.3-.8-1.6.9-.5 2.4H7.3l-.5-2.4-1.6-.9-2.3.8L1.2 11.9 3 10.3V8.4L1.2 6.8 2.9 3.9l2.3.8 1.6-.9zM9 6.1a3.1 3.1 0 1 0 0 6.2 3.1 3.1 0 1 0 0-6.2z"/></svg>
<div class="a" style="left:774px;top:849px;width:1129px;height:135px;background:#290000;"></div>
<div class="a" style="left:774px;top:872px;width:1129px;height:1px;background:#5e0000;"></div>
<div class="a" style="left:774px;top:933px;width:1129px;height:1px;background:#5e0000;"></div>
<div class="a" style="left:774px;top:959px;width:1129px;height:1px;background:#5e0000;"></div>
<div class="a" style="left:774px;top:983px;width:1129px;height:1px;background:#5e0000;"></div>
<div class="a" style="left:1903px;top:849px;width:17px;height:181px;background:#242424;"></div>
<div class="a" style="left:1903.5px;top:852px;width:16px;height:182px;background:#393939;border-radius:3px;border:1px solid #4a4a4a"></div>
<svg class="a" style="left:783px;top:853px;overflow:visible" width="12" height="12" viewBox="0 0 12 12"><circle cx="6" cy="6" r="5.9" fill="#e5404b"/><path d="M3.7 3.7L8.3 8.3M8.3 3.7L3.7 8.3" stroke="#fff" stroke-width="1.5"/></svg>
<div class="t m" style="left:804.3px;top:854.68px;font-size:13.72px;color:#f28b82;">Failed to load resource: the server responded with a status of 513 (unknow)</div>
<div class="t m" style="left:1751.452px;top:854.68px;font-size:13.72px;color:#cfcfcf;text-decoration:underline">announcement:1</div>
<svg class="a" style="left:783px;top:878.5px;overflow:visible" width="12" height="12" viewBox="0 0 12 12"><circle cx="6" cy="6" r="5.9" fill="#e5404b"/><path d="M3.7 3.7L8.3 8.3M8.3 3.7L3.7 8.3" stroke="#fff" stroke-width="1.5"/></svg>
<div class="t m" style="left:804.3px;top:880.58px;font-size:13.72px;color:#f28b82;">Uncaught (in promise)</div>
<div class="t m" style="left:1767.9160000000002px;top:880.58px;font-size:13.72px;color:#cfcfcf;text-decoration:underline">settle.js:19</div>
<svg class="a" style="left:806px;top:908.3px;overflow:visible" width="7.1" height="8.8" viewBox="0 0 7.1 8.8"><path d="M0 0L7.1 4.4 0 8.8Z" fill="#8a8a8a"/></svg>
<div class="t m" style="left:817.7px;top:898.88px;font-size:13.72px;color:#e0e0e0;font-style:italic"><span style="color:#e0e0e0">ie {</span><span style="color:#b0b0b0">message: </span><span style="color:#f29766">"Request failed with status code 513"</span><span style="color:#e0e0e0">, </span><span style="color:#b0b0b0">name: </span><span style="color:#f29766">"AxiosError"</span><span style="color:#e0e0e0">, </span><span style="color:#b0b0b0">code: </span><span style="color:#f29766">"ERR_BAD_RESPONSE"</span><span style="color:#e0e0e0">, </span><span style="color:#b0b0b0">config: </span><span style="color:#e0e0e0">{…}, </span><span style="color:#b0b0b0">request: </span><span style="color:#e0e0e0">XMLHttpR</span></div>
<div class="t m" style="left:817.7px;top:916.78px;font-size:13.72px;color:#e0e0e0;font-style:italic"><span style="color:#e0e0e0">equest, …}</span></div>
<svg class="a" style="left:783px;top:939.8px;overflow:visible" width="12" height="12" viewBox="0 0 12 12"><circle cx="6" cy="6" r="5.9" fill="#e5404b"/><path d="M3.7 3.7L8.3 8.3M8.3 3.7L3.7 8.3" stroke="#fff" stroke-width="1.5"/></svg>
<div class="t m" style="left:804.3px;top:941.98px;font-size:13.72px;color:#f28b82;">Failed to load resource: the server responded with a status of 513 (unknow)</div>
<div class="t m" style="left:1718.5240000000001px;top:941.98px;font-size:13.72px;color:#cfcfcf;text-decoration:underline">api.94speed.com/:1</div>
<svg class="a" style="left:783px;top:965.5px;overflow:visible" width="12" height="12" viewBox="0 0 12 12"><circle cx="6" cy="6" r="5.9" fill="#e5404b"/><path d="M3.7 3.7L8.3 8.3M8.3 3.7L3.7 8.3" stroke="#fff" stroke-width="1.5"/></svg>
<div class="t m" style="left:804.3px;top:967.98px;font-size:13.72px;color:#f28b82;">Failed to load resource: the server responded with a status of 513 (unknow)</div>
<div class="t m" style="left:1718.5240000000001px;top:967.98px;font-size:13.72px;color:#cfcfcf;text-decoration:underline">api.94speed.com/:1</div>
<svg class="a" style="left:786px;top:991px;overflow:visible" width="6" height="10" viewBox="0 0 6 10"><path d="M1 1L5 5 1 9" fill="none" stroke="#4c8df6" stroke-width="1.6"/></svg>

<div id="taskbar" class="a">
  <div class="a" style="left:744px;top:0;width:61px;height:9px;background:#333"></div><div class="a" style="left:1778px;top:7.5px;width:4px;height:1.5px;background:#d8d8d8;border-radius:1px 1px 0 0"></div><div class="a" style="left:1791px;top:7.5px;width:6px;height:1.5px;background:#d8d8d8;border-radius:1px 1px 0 0"></div><div class="a" style="left:1800px;top:7.5px;width:6px;height:1.5px;background:#d8d8d8;border-radius:1px 1px 0 0"></div><div class="a" style="left:1813px;top:7.5px;width:5px;height:1.5px;background:#d8d8d8;border-radius:1px 1px 0 0"></div><div class="a" style="left:1822px;top:7.5px;width:5px;height:1.5px;background:#d8d8d8;border-radius:1px 1px 0 0"></div><div class="a" style="left:1914px;top:0;width:1px;height:9px;background:#555"></div>
</div>
</body></html>
